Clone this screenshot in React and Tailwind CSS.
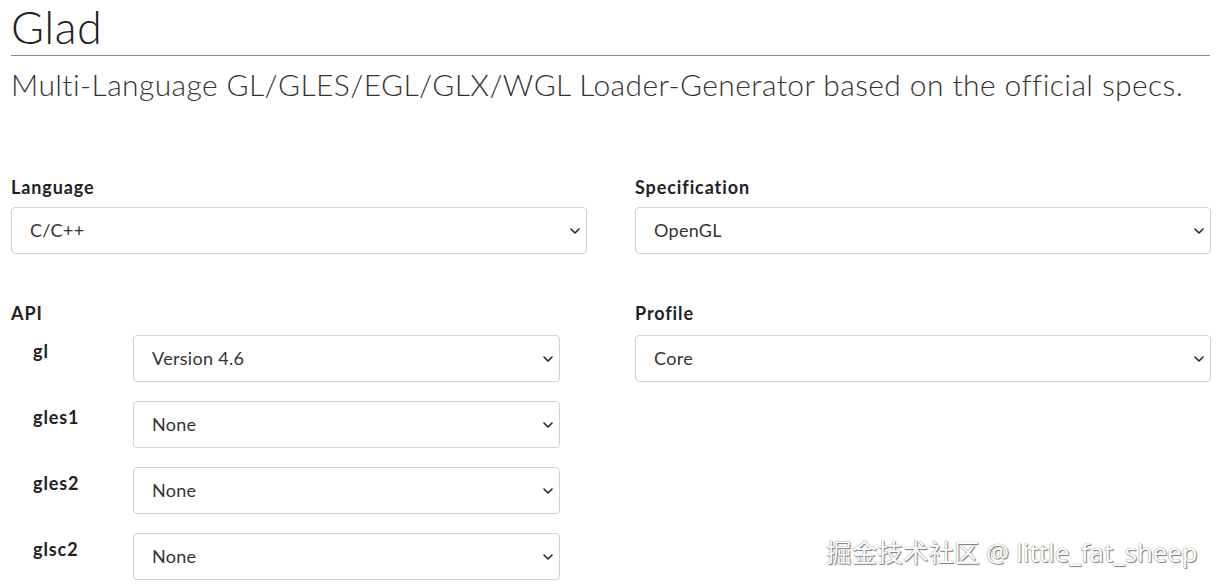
import React from 'react';

const Chevron = () => (
  <svg
    className="pointer-events-none absolute right-[6px] top-1/2 -translate-y-1/2"
    width="12"
    height="8"
    viewBox="0 0 12 8"
    fill="none"
  >
    <path d="M2 2l4 4 4-4" stroke="#222" strokeWidth="1.6" strokeLinecap="round" strokeLinejoin="round" />
  </svg>
);

const Select = ({ value, options, className = '' }) => (
  <div className={`relative ${className}`}>
    <select
      defaultValue={value}
      className="w-full h-[47px] appearance-none rounded-[4px] border border-[#d2d2d2] bg-white pl-[18px] pr-8 text-[18px] font-normal tracking-[0.3px] text-[#333] outline-none"
    >
      {options.map((o) => (
        <option key={o}>{o}</option>
      ))}
    </select>
    <Chevron />
  </div>
);

const Field = ({ label, gap = 'mb-[8px]', children }) => (
  <div className="flex flex-col">
    <label className={`text-[18px] font-bold tracking-[0.9px] text-[#222] leading-[24px] ${gap}`}>{label}</label>
    {children}
  </div>
);

const ApiRow = ({ name, value, options }) => (
  <div className="flex items-start">
    <span className="w-[122px] pl-[22px] pt-[3px] text-[18px] font-bold tracking-[0.9px] text-[#222]">{name}</span>
    <Select value={value} options={options} className="w-[427px]" />
  </div>
);

export default function App() {
  const versions = ['None', 'Version 1.0', 'Version 2.0', 'Version 3.3', 'Version 4.5', 'Version 4.6'];

  return (
    <div className="relative min-h-screen bg-white font-['Lato',sans-serif] text-[#333] overflow-hidden">
      <div className="pl-[11px] pr-[7px]">
        <h1 className="text-[45px] font-light leading-[54px] text-[#222] tracking-[0.5px]">Glad</h1>
        <hr className="mt-[1px] border-t border-[#888] mr-[1px]" />
        <p className="mt-[8px] text-[30px] font-light leading-[40px] tracking-[0.4px] text-[#333]">
          Multi-Language GL/GLES/EGL/GLX/WGL Loader-Generator based on the official specs.
        </p>

        <div className="mt-[71px] grid grid-cols-[576px_576px] gap-x-[48px]">
          <div className="flex flex-col gap-[47px]">
            <Field label="Language">
              <Select value="C/C++" options={['C/C++', 'Rust', 'Python']} />
            </Field>
            <div className="flex flex-col">
              <label className="text-[18px] font-bold tracking-[0.9px] text-[#222] leading-[24px] mb-[10px]">API</label>
              <div className="flex flex-col gap-[19px]">
                <ApiRow name="gl" value="Version 4.6" options={versions} />
                <ApiRow name="gles1" value="None" options={['None', 'Version 1.0']} />
                <ApiRow name="gles2" value="None" options={['None', 'Version 2.0', 'Version 3.2']} />
                <ApiRow name="glsc2" value="None" options={['None', 'Version 2.0']} />
              </div>
            </div>
          </div>

          <div className="flex flex-col gap-[47px]">
            <Field label="Specification">
              <Select value="OpenGL" options={['OpenGL', 'EGL', 'GLX', 'WGL']} />
            </Field>
            <Field label="Profile" gap="mb-[10px]">
              <Select value="Core" options={['Core', 'Compatibility']} />
            </Field>
          </div>
        </div>
      </div>

      <div className="absolute left-[826px] top-[534px] text-[25.5px] leading-[36px] tracking-[0.1px] text-white font-['Noto_Sans','Noto_Sans_CJK_SC',sans-serif] [text-shadow:1px_1px_1px_#777,0_0_1px_#555]">
        掘金技术社区 @ little_fat_sheep
      </div>
    </div>
  );
}
